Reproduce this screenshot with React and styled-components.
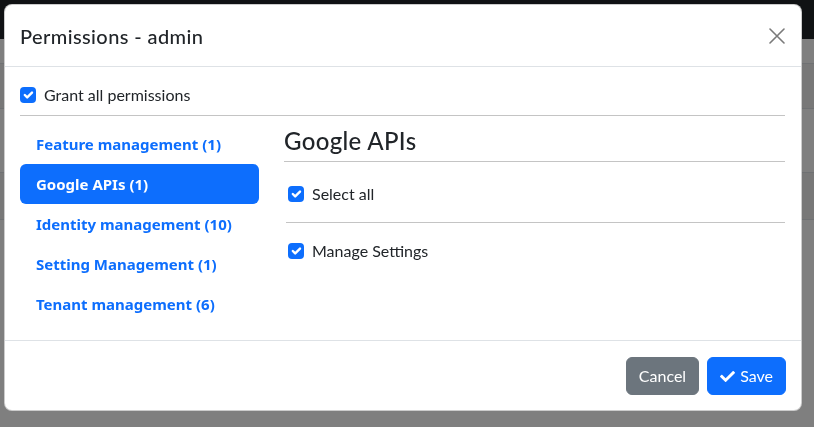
import React from "react";
import styled, { createGlobalStyle } from "styled-components";
import { FaCheck } from "react-icons/fa";

const GlobalStyle = createGlobalStyle`
  html, body { margin: 0; padding: 0; }
  body {
    font-family: Lato, "Noto Sans", sans-serif;
    color: #212529;
    background: #fff;
    overflow: hidden;
  }
  * { box-sizing: border-box; }
`;

const Page = styled.div`
  width: 814px;
  height: 427px;
  display: flex;
  flex-direction: column;
`;

const Navbar = styled.div`
  height: 39px;
  background: #212529;
  flex-shrink: 0;
`;

const TableArea = styled.div`
  display: flex;
  flex-direction: column;
  padding-top: 24px;
`;

const TableRow = styled.div`
  height: ${(p) => p.$h}px;
  border-top: 1px solid #dee2e6;
  background: ${(p) => (p.$striped ? "#f0f0f0" : "#fff")};
`;

const Backdrop = styled.div`
  position: fixed;
  inset: 0;
  background: rgba(0, 0, 0, 0.5);
  padding: 4px;
  display: flex;
  align-items: flex-start;
  justify-content: flex-start;
`;

const Modal = styled.div`
  width: 798px;
  background: #fff;
  border: 1px solid rgba(0, 0, 0, 0.2);
  border-radius: 8px;
  display: flex;
  flex-direction: column;
`;

const Header = styled.div`
  display: flex;
  align-items: center;
  justify-content: space-between;
  padding: 16px 16px 15px 15px;
  border-bottom: 1px solid #dee2e6;
`;

const Title = styled.h5`
  margin: 0;
  font-size: 20px;
  font-weight: 500;
  line-height: 30px;
  letter-spacing: 0.4px;
  color: #212529;
`;

const CloseButton = styled.button`
  width: 16px;
  height: 16px;
  padding: 0;
  border: 0;
  background: transparent;
  display: flex;
  cursor: pointer;
`;

const Body = styled.div`
  padding: 16px 16px 16px 15px;
`;

const CheckRow = styled.label`
  display: flex;
  align-items: center;
  gap: 8px;
  font-size: 16px;
  line-height: 24px;
  color: #212529;
  padding-left: ${(p) => p.$indent || 0}px;
`;

const Box = styled.span`
  width: 16px;
  height: 16px;
  border-radius: 4px;
  background: #0d6efd;
  display: inline-flex;
  flex-shrink: 0;
`;

const Rule = styled.hr`
  margin: ${(p) => p.$m || "8px 0"};
  border: 0;
  border-top: 1px solid #c4c4c4;
`;

const Columns = styled.div`
  display: grid;
  grid-template-columns: 239px 1fr;
  column-gap: 25px;
`;

const Nav = styled.nav`
  display: flex;
  flex-direction: column;
`;

const NavLink = styled.a`
  display: block;
  padding: 8px 16px;
  font-family: "Noto Sans", sans-serif;
  font-size: 15px;
  line-height: 24px;
  font-weight: 700;
  white-space: nowrap;
  border-radius: 6px;
  text-decoration: none;
  color: ${(p) => (p.$active ? "#fff" : "#0d6efd")};
  background: ${(p) => (p.$active ? "#0d6efd" : "transparent")};
`;

const Panel = styled.div`
  display: flex;
  flex-direction: column;
`;

const PanelTitle = styled.h4`
  margin: 2px 0 0;
  font-size: 24px;
  font-weight: 500;
  line-height: 29px;
  letter-spacing: 0.35px;
  color: #212529;
`;

const PermList = styled.div`
  margin-left: 2px;
  display: flex;
  flex-direction: column;
`;

const Footer = styled.div`
  display: flex;
  justify-content: flex-end;
  gap: 8px;
  padding: 16px 15px 15px;
  border-top: 1px solid #dee2e6;
`;

const Button = styled.button`
  font-family: inherit;
  font-size: 16px;
  line-height: 24px;
  padding: 6px 12px;
  border-radius: 6px;
  border: 1px solid ${(p) => (p.$primary ? "#0d6efd" : "#6c757d")};
  background: ${(p) => (p.$primary ? "#0d6efd" : "#6c757d")};
  color: #fff;
  display: inline-flex;
  align-items: center;
  gap: 5px;
  cursor: pointer;
`;

const Checkbox = () => (
  <Box>
    <svg width="16" height="16" viewBox="0 0 20 20">
      <path d="m6 10 3 3 6-6" fill="none" stroke="#fff" strokeWidth="3" strokeLinecap="round" strokeLinejoin="round" />
    </svg>
  </Box>
);

const groups = [
  "Feature management (1)",
  "Google APIs (1)",
  "Identity management (10)",
  "Setting Management (1)",
  "Tenant management (6)",
];

export default function App() {
  return (
    <>
      <GlobalStyle />
      <Page>
        <Navbar />
        <TableArea>
          <TableRow $h={45} $striped />
          <TableRow $h={64} />
          <TableRow $h={47} $striped />
          <TableRow $h={60} />
        </TableArea>
      </Page>
      <Backdrop>
        <Modal>
          <Header>
            <Title>Permissions - admin</Title>
            <CloseButton aria-label="Close">
              <svg width="16" height="16" viewBox="0 0 16 16">
                <path d="M1 1 15 15M15 1 1 15" stroke="#7a7a7a" strokeWidth="1.6" strokeLinecap="round" />
              </svg>
            </CloseButton>
          </Header>
          <Body>
            <CheckRow>
              <Checkbox />
              Grant all permissions
            </CheckRow>
            <Rule />
            <Columns>
              <Nav>
                {groups.map((g) => (
                  <NavLink key={g} $active={g.startsWith("Google")}>
                    {g}
                  </NavLink>
                ))}
              </Nav>
              <Panel>
                <PanelTitle>Google APIs</PanelTitle>
                <Rule $m="6px 0 20px" />
                <PermList>
                  <CheckRow $indent={2}>
                    <Checkbox />
                    Select all
                  </CheckRow>
                  <Rule $m="16px 0 16px" />
                  <CheckRow $indent={2}>
                    <Checkbox />
                    Manage Settings
                  </CheckRow>
                </PermList>
              </Panel>
            </Columns>
          </Body>
          <Footer>
            <Button>Cancel</Button>
            <Button $primary>
              <FaCheck size={15} />
              Save
            </Button>
          </Footer>
        </Modal>
      </Backdrop>
    </>
  );
}
